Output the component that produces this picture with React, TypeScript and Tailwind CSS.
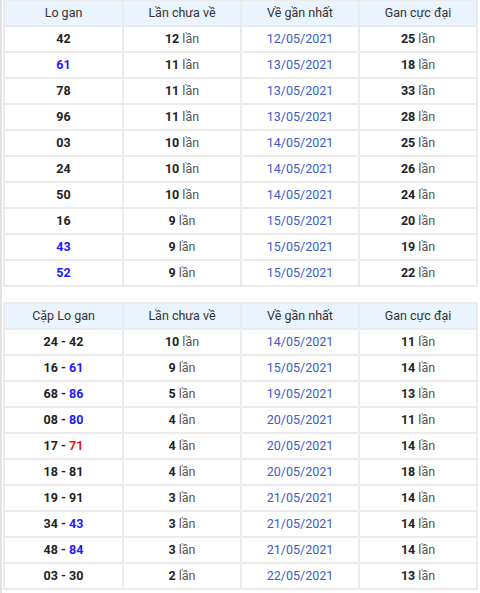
import React from "react";

type Part = { t: string; c?: "b" | "r" };
type Row1 = { lo: Part[]; chua: string; ve: string; gan: string };

const t1: Row1[] = [
  { lo: [{ t: "42" }], chua: "12", ve: "12/05/2021", gan: "25" },
  { lo: [{ t: "61", c: "b" }], chua: "11", ve: "13/05/2021", gan: "18" },
  { lo: [{ t: "78" }], chua: "11", ve: "13/05/2021", gan: "33" },
  { lo: [{ t: "96" }], chua: "11", ve: "13/05/2021", gan: "28" },
  { lo: [{ t: "03" }], chua: "10", ve: "14/05/2021", gan: "25" },
  { lo: [{ t: "24" }], chua: "10", ve: "14/05/2021", gan: "26" },
  { lo: [{ t: "50" }], chua: "10", ve: "14/05/2021", gan: "24" },
  { lo: [{ t: "16" }], chua: "9", ve: "15/05/2021", gan: "20" },
  { lo: [{ t: "43", c: "b" }], chua: "9", ve: "15/05/2021", gan: "19" },
  { lo: [{ t: "52", c: "b" }], chua: "9", ve: "15/05/2021", gan: "22" },
];

const t2: Row1[] = [
  { lo: [{ t: "24 - 42" }], chua: "10", ve: "14/05/2021", gan: "11" },
  { lo: [{ t: "16 - " }, { t: "61", c: "b" }], chua: "9", ve: "15/05/2021", gan: "14" },
  { lo: [{ t: "68 - " }, { t: "86", c: "b" }], chua: "5", ve: "19/05/2021", gan: "13" },
  { lo: [{ t: "08 - " }, { t: "80", c: "b" }], chua: "4", ve: "20/05/2021", gan: "11" },
  { lo: [{ t: "17 - " }, { t: "71", c: "r" }], chua: "4", ve: "20/05/2021", gan: "14" },
  { lo: [{ t: "18 - 81" }], chua: "4", ve: "20/05/2021", gan: "18" },
  { lo: [{ t: "19 - 91" }], chua: "3", ve: "21/05/2021", gan: "14" },
  { lo: [{ t: "34 - " }, { t: "43", c: "b" }], chua: "3", ve: "21/05/2021", gan: "14" },
  { lo: [{ t: "48 - " }, { t: "84", c: "b" }], chua: "3", ve: "21/05/2021", gan: "14" },
  { lo: [{ t: "03 - 30" }], chua: "2", ve: "22/05/2021", gan: "13" },
];

const td = "border-2 border-[#ebebeb] h-[26px] p-0 text-center align-middle";

function Lan({ n }: { n: string }) {
  return (
    <>
      <span className="font-bold text-[#222]">{n}</span>{" "}
      <span className="text-[#555]">lần</span>
    </>
  );
}

function Table({ first, rows }: { first: string; rows: Row1[] }) {
  return (
    <table className="w-[473px] border-collapse table-fixed text-[12.5px] leading-[18px]">
      <colgroup>
        <col className="w-[119px]" />
        <col className="w-[118px]" />
        <col className="w-[118px]" />
        <col className="w-[118px]" />
      </colgroup>
      <thead>
        <tr className="bg-[#eaf4fe] text-[#333]">
          <th className={td + " font-normal"}>{first}</th>
          <th className={td + " font-normal"}>Lần chưa về</th>
          <th className={td + " font-normal"}>Về gần nhất</th>
          <th className={td + " font-normal"}>Gan cực đại</th>
        </tr>
      </thead>
      <tbody>
        {rows.map((r, i) => (
          <tr key={i} className="bg-white">
            <td className={td + " font-bold text-[#222]"}>
              {r.lo.map((p, j) => (
                <span
                  key={j}
                  className={
                    p.c === "b" ? "text-[#1a1aff]" : p.c === "r" ? "text-[#f01010]" : ""
                  }
                >
                  {p.t}
                </span>
              ))}
            </td>
            <td className={td}>
              <Lan n={r.chua} />
            </td>
            <td className={td + " text-[#3a5ccc]"}>{r.ve}</td>
            <td className={td}>
              <Lan n={r.gan} />
            </td>
          </tr>
        ))}
      </tbody>
    </table>
  );
}

export default function App() {
  return (
    <div
      className="w-[480px] h-[593px] bg-white border-l-2 border-[#e2e2e2] pl-[1px] overflow-hidden"
      style={{ fontFamily: "Roboto, 'Liberation Sans', sans-serif" }}
    >
      <div className="flex flex-col gap-[15px] -mt-[1px]">
        <Table first="Lo gan" rows={t1} />
        <Table first="Cặp Lo gan" rows={t2} />
      </div>
    </div>
  );
}
